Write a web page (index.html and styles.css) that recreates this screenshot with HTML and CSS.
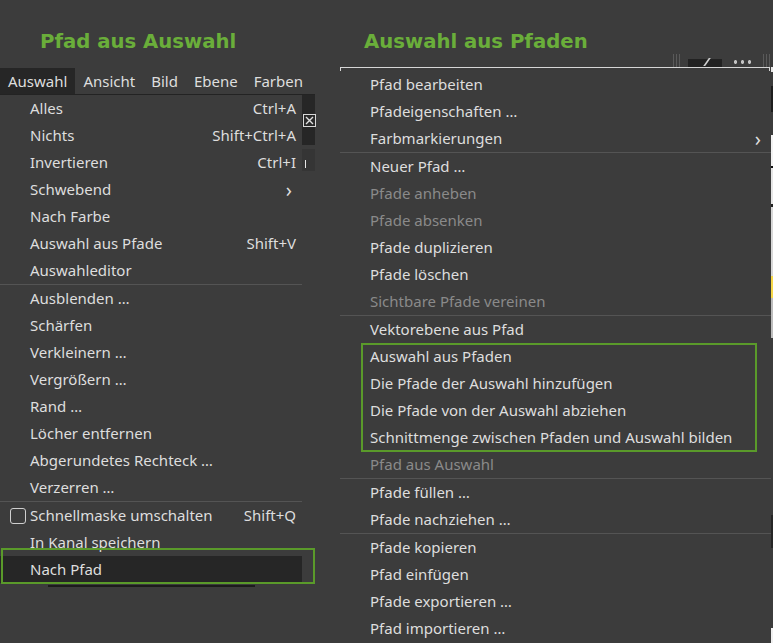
FILE: index.html
```html
<!DOCTYPE html>
<html lang="de">
<head>
  <meta charset="UTF-8" />
  <title>Auswahl und Pfade</title>
  <link rel="stylesheet" href="styles.css">
</head>
<body>
  <section class="panel panel-left">
    <h1 class="caption">Pfad aus Auswahl</h1>

    <div class="menubar">
      <span class="menubar-item is-open">Auswahl</span>
      <span class="menubar-item">Ansicht</span>
      <span class="menubar-item">Bild</span>
      <span class="menubar-item">Ebene</span>
      <span class="menubar-item">Farben</span>
    </div>

    <div class="menu-wrap">
      <ul class="menu menu-select">
        <li class="item"><span>Alles</span><span class="accel">Ctrl+A</span></li>
        <li class="item"><span>Nichts</span><span class="accel">Shift+Ctrl+A</span></li>
        <li class="item"><span>Invertieren</span><span class="accel">Ctrl+I</span></li>
        <li class="item"><span>Schwebend</span><span class="submenu">&#x203A;</span></li>
        <li class="item"><span>Nach Farbe</span></li>
        <li class="item"><span>Auswahl aus Pfade</span><span class="accel">Shift+V</span></li>
        <li class="item"><span>Auswahleditor</span></li>
        <li class="sep"></li>
        <li class="item"><span>Ausblenden …</span></li>
        <li class="item"><span>Schärfen</span></li>
        <li class="item"><span>Verkleinern …</span></li>
        <li class="item"><span>Vergrößern …</span></li>
        <li class="item"><span>Rand …</span></li>
        <li class="item"><span>Löcher entfernen</span></li>
        <li class="item"><span>Abgerundetes Rechteck …</span></li>
        <li class="item"><span>Verzerren …</span></li>
        <li class="sep"></li>
        <li class="item has-check"><span class="check"></span><span>Schnellmaske umschalten</span><span class="accel">Shift+Q</span></li>
        <li class="item"><span>In Kanal speichern</span></li>
        <li class="item is-hover marked"><span>Nach Pfad</span></li>
      </ul>

      <div class="dock-strip">
        <div class="dock-top">
          <svg class="dock-close" width="13" height="13" viewBox="0 0 13 13">
            <rect x="0.5" y="0.5" width="12" height="12" fill="#2a2a2a" stroke="#d8d8d8" />
            <path d="M3 3 L10 10 M10 3 L3 10" stroke="#e0e0e0" stroke-width="1.4" />
          </svg>
        </div>
        <div class="dock-bottom"><span class="dock-tick"></span></div>
      </div>
    </div>

    <div class="canvas-ruler"></div>
  </section>

  <section class="panel panel-right">
    <div class="caption-row">
      <h1 class="caption">Auswahl aus Pfaden</h1>
      <div class="toolbar-bits">
        <span class="grip"></span>
        <span class="tool-dark"><span class="tool-slash"></span></span>
        <span class="tool-dots"></span>
        <span class="grip grip-narrow"></span>
      </div>
    </div>

    <div class="menu-frame"></div>
    <ul class="menu menu-paths">
      <li class="item"><span>Pfad bearbeiten</span></li>
      <li class="item"><span>Pfadeigenschaften …</span></li>
      <li class="item"><span>Farbmarkierungen</span><span class="submenu">&#x203A;</span></li>
      <li class="sep"></li>
      <li class="item"><span>Neuer Pfad …</span></li>
      <li class="item disabled"><span>Pfade anheben</span></li>
      <li class="item disabled"><span>Pfade absenken</span></li>
      <li class="item"><span>Pfade duplizieren</span></li>
      <li class="item"><span>Pfade löschen</span></li>
      <li class="item disabled"><span>Sichtbare Pfade vereinen</span></li>
      <li class="sep"></li>
      <li class="item"><span>Vektorebene aus Pfad</span></li>
      <li class="group marked">
        <ul class="menu">
          <li class="item"><span>Auswahl aus Pfaden</span></li>
          <li class="item"><span>Die Pfade der Auswahl hinzufügen</span></li>
          <li class="item"><span>Die Pfade von der Auswahl abziehen</span></li>
          <li class="item"><span>Schnittmenge zwischen Pfaden und Auswahl bilden</span></li>
        </ul>
      </li>
      <li class="item disabled"><span>Pfad aus Auswahl</span></li>
      <li class="sep"></li>
      <li class="item"><span>Pfade füllen …</span></li>
      <li class="item"><span>Pfade nachziehen …</span></li>
      <li class="sep"></li>
      <li class="item"><span>Pfade kopieren</span></li>
      <li class="item"><span>Pfad einfügen</span></li>
      <li class="item"><span>Pfade exportieren …</span></li>
      <li class="item"><span>Pfad importieren …</span></li>
    </ul>
  </section>

  <div class="canvas-edge"></div>
</body>
</html>
```

FILE: styles.css
```css
:root {
  --bg: #3c3c3c;
  --text: #dedede;
  --text-off: #8a8a8a;
  --sep: #545454;
  --hover: #262626;
  --green: #6aae3a;
  --mark: #5a9a2a;
}
* {
  margin: 0; padding: 0; box-sizing: border-box;
}
body {
  font-family: 'Noto Sans', 'DejaVu Sans', sans-serif;
  font-size: 15px;
  background-color: var(--bg);
  color: var(--text);
  width: 773px;
  height: 643px;
  overflow: hidden;
  display: flex;
}
ul {
  list-style: none;
}

/* green captions above each menu */
.caption {
  font-family: 'DejaVu Sans', sans-serif;
  font-weight: 700;
  font-size: 19.7px;
  line-height: 22px;
  color: var(--green);
}

.panel-left {
  width: 340px;
  flex-shrink: 0;
}
.panel-left .caption {
  height: 68px;
  padding: 31px 0 0 40px;
}

/* menubar */
.menubar {
  width: 315px;
  height: 27px;
  display: flex;
  border-bottom: 1px solid #232323;
}
.menubar-item {
  line-height: 26px;
  padding: 0 8px;
}
.menubar-item.is-open {
  background-color: var(--hover);
}

/* menus */
.menu-wrap {
  display: flex;
  width: 315px;
}
.menu .item {
  height: 27px;
  line-height: 27px;
  display: flex;
  align-items: center;
  padding: 0 6px 0 30px;
  position: relative;
  white-space: nowrap;
}
.menu .item .accel,
.menu .item .submenu {
  margin-left: auto;
}
.menu .item .submenu {
  font-size: 20px;
  padding-right: 4px;
}
.menu .item.disabled {
  color: var(--text-off);
}
.menu .sep {
  height: 1px;
  background-color: var(--sep);
}
.menu-select {
  width: 302px;
}
.menu .item.has-check {
  padding-left: 10px;
}
.check {
  width: 16px;
  height: 16px;
  border: 1px solid #cfcfcf;
  border-radius: 3px;
  margin-right: 4px;
}
.menu .item.is-hover {
  background-color: var(--hover);
}
.menu-select .marked::after {
  content: '';
  position: absolute;
  top: -8px; bottom: -1px; left: 1px; right: -13px;
  border: 2px solid var(--mark);
}

/* docked panel edge beside the left menu */
.dock-strip {
  width: 13px;
  display: flex;
  flex-direction: column;
}
.dock-top {
  height: 50px;
  background-color: #262626;
  padding-top: 19px;
}
.dock-close {
  display: block;
  margin-left: 1px;
}
.dock-bottom {
  margin-top: 4px;
  height: 22px;
  background-color: #353535;
  padding: 11px 0 0 3px;
}
.dock-tick {
  display: block;
  width: 1px;
  height: 8px;
  background-color: #e6e6e6;
}
.canvas-ruler {
  margin: 2px 0 0 48px;
  width: 207px;
  height: 2px;
  background-color: #1c1c1c;
}

/* right panel */
.panel-right {
  width: 431px;
  flex-shrink: 0;
}
.caption-row {
  height: 67px;
  display: flex;
  justify-content: space-between;
  align-items: flex-end;
}
.panel-right .caption {
  padding: 31px 0 14px 24px;
}
.toolbar-bits {
  display: flex;
  align-items: flex-end;
  height: 13px;
  gap: 6px;
  padding-right: 1px;
}
.grip {
  width: 9px;
  height: 13px;
  background: repeating-linear-gradient(90deg, #5a5a5a 0 1px, transparent 1px 3px);
}
.grip-narrow {
  width: 7px;
}
.tool-dark {
  width: 34px;
  height: 8px;
  background-color: #222;
  position: relative;
}
.tool-slash {
  position: absolute;
  left: 18px; top: -1px;
  width: 2px; height: 8px;
  background-color: #cfcfcf;
  transform: skewX(-35deg);
}
.tool-dots {
  width: 21px;
  height: 6px;
  margin: 0 4px 2px;
  background: radial-gradient(circle, #c4c4c4 0 1.6px, transparent 2px) 0 0 / 7px 6px repeat-x;
}
.menu-frame {
  height: 4px;
  border: 1px solid #d6d6d6;
  border-bottom: none;
  margin-right: 1px;
}
.group {
  position: relative;
}
.menu-paths .marked::after {
  content: '';
  position: absolute;
  top: 0; bottom: -1px; left: 21px; right: 14px;
  border: 2px solid var(--mark);
}

/* sliver of the image canvas at the far right */
.canvas-edge {
  width: 2px;
  height: 643px;
  flex-shrink: 0;
  background: linear-gradient(180deg,
    #3c3c3c 0 67px, #e8e8e8 67px 72px, #3c3c3c 72px 86px,
    #1e1e1e 86px 112px, #3c3c3c 112px 135px, #f2f2f2 135px 166px,
    #111 166px 168px, #e6e6e6 168px 204px, #222 204px 207px,
    #d8d8d8 207px 276px, #f6d84a 276px 298px, #bdbdbd 298px 338px,
    #3c3c3c 338px 515px, #262626 515px 548px, #3c3c3c 548px 628px,
    #f0f0f0 628px 643px);
}
```
